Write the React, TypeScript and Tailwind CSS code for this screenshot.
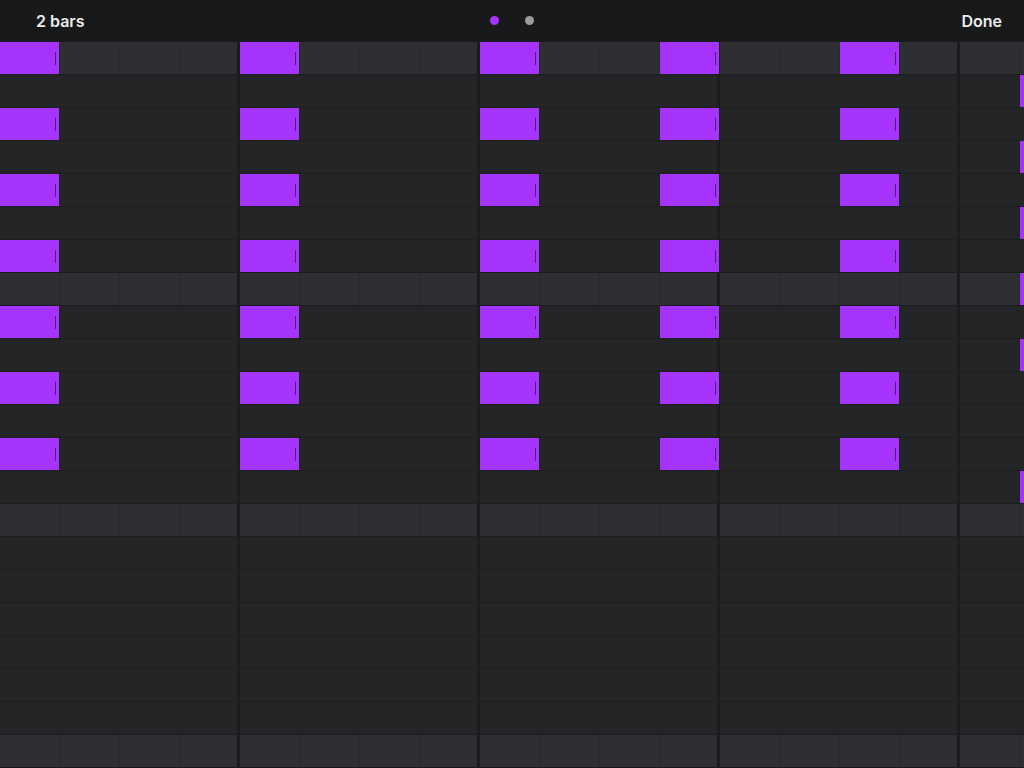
const ROWS = 22;
const BARS = 5;

// note positions: x in px, row index
const notes: { x: number; row: number }[] = [
  ...[0, 240, 480, 660, 840].flatMap((x) =>
    [0, 2, 4, 6, 8, 10, 12].map((row) => ({ x, row }))
  ),
  ...[1, 3, 5, 7, 9, 13].map((row) => ({ x: 1020, row })),
];

const GridRow = ({ accent }: { accent: boolean }) => (
  <div
    className={`flex h-[33px] shrink-0 border-t border-[#1c1d1f] ${
      accent ? "bg-[#2e2f33]" : "bg-[#242527]"
    }`}
  >
    {Array.from({ length: BARS }).map((_, b) => (
      <div key={b} className="flex w-[240px] shrink-0">
        {[0, 1, 2].map((c) => (
          <div
            key={c}
            className={`w-[60px] border-r ${
              accent ? "border-[#292a2d]" : "border-[#222325]"
            }`}
          />
        ))}
        <div className="w-[57px]" />
        <div className="w-[3px] bg-[#1b1c1e]" />
      </div>
    ))}
  </div>
);

export default function App() {
  return (
    <div className="flex h-[768px] w-[1024px] flex-col overflow-hidden bg-[#18191b] font-['Inter','Open_Sans',sans-serif]">
      {/* header */}
      <header className="grid h-[41px] shrink-0 grid-cols-[1fr_auto_1fr] items-center bg-[#18191b]">
        <span className="pl-[36px] text-[16px] font-semibold text-[#ececec]">2 bars</span>
        <div className="flex items-center gap-[26px]">
          <span className="h-[9px] w-[9px] rounded-full bg-[#a633fb]" />
          <span className="h-[9px] w-[9px] rounded-full bg-[#9b9b9b]" />
        </div>
        <span className="pr-[22px] text-right text-[16px] font-semibold text-[#ececec]">Done</span>
      </header>

      {/* piano roll grid */}
      <div className="relative flex flex-col">
        {Array.from({ length: ROWS }).map((_, i) => (
          <GridRow key={i} accent={i % 7 === 0} />
        ))}

        {notes.map((n, i) => (
          <div
            key={i}
            className="absolute h-[32px] w-[59px] bg-[#a633fb]"
            style={{ left: n.x, top: n.row * 33 + 1 }}
          >
            <div className="absolute right-[3px] top-[10px] h-[13px] w-px bg-[#4e1d7e]" />
          </div>
        ))}
      </div>
    </div>
  );
}
